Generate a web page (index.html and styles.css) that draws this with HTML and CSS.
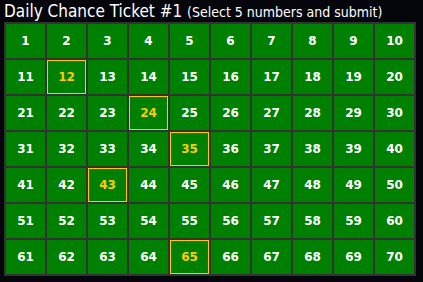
FILE: index.html
```html
<!DOCTYPE html>
<html lang="en">
<head>
    <meta charset="UTF-8">
    <title>Daily Chance Ticket</title>
    <link rel="stylesheet" href="styles.css">
</head>
<body>
    <div class="ticket">
        <h2 class="title">Daily Chance Ticket #1 <span class="hint">(Select 5 numbers and submit)</span></h2>
        <div class="grid" id="grid"></div>
    </div>

    <script>
        const picked = [12, 24, 35, 43, 65];
        const grid = document.getElementById('grid');

        for (let n = 1; n <= 70; n++) {
            const cell = document.createElement('div');
            cell.className = 'cell';
            if (picked.includes(n)) {
                cell.classList.add('picked');
            }
            cell.innerText = n;
            cell.addEventListener('click', function () {
                this.classList.toggle('picked');
            });
            grid.appendChild(cell);
        }
    </script>
</body>
</html>
```

FILE: styles.css
```css
body {
    margin: 0;
    background-color: #05060c;
    font-family: "DejaVu Sans Condensed", "DejaVu Sans", sans-serif;
    color: white;
}
.ticket {
    padding: 0 4px;
}
.title {
    margin: 0;
    height: 22px;
    font-size: 17px;
    font-weight: normal;
    line-height: 22px;
    white-space: nowrap;
}
.hint {
    font-size: 14px;
}
.grid {
    display: grid;
    grid-template-columns: repeat(10, 39px);
    grid-auto-rows: 34px;
    gap: 2px;
    padding: 2px;
    width: max-content;
    background-color: #333333;
}
.cell {
    display: flex;
    align-items: center;
    justify-content: center;
    background-color: #008000;
    font-family: "DejaVu Sans", sans-serif;
    font-size: 12px;
    font-weight: bold;
    cursor: pointer;
    box-sizing: border-box;
}
.cell.picked {
    color: #ffcc00;
    border: 1px solid #ffcc00;
}
```
